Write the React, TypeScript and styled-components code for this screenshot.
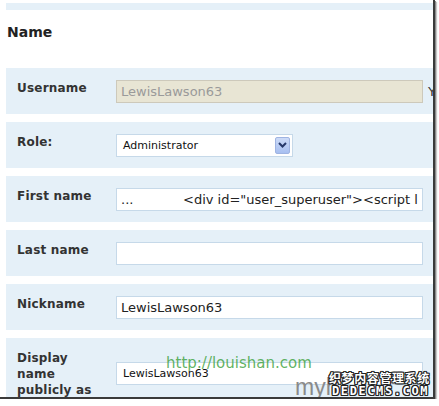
import React from 'react';
import styled, { createGlobalStyle } from 'styled-components';

const GlobalStyle = createGlobalStyle`
  html, body {
    margin: 0;
    padding: 0;
    background: #ffffff;
  }
  body {
    font-family: 'DejaVu Sans', Verdana, sans-serif;
  }
`;

const Frame = styled.div`
  position: relative;
  width: 433px;
  height: 397px;
  overflow: hidden;
  background: #ffffff;
  border-right: 2px solid #3a3a3a;
  border-bottom: 2px solid #3a3a3a;
  box-shadow: 1px 1px 0 #8a8a8a, 2px 2px 1px #c8c8c8;
`;

const TopBand = styled.div`
  margin: 3px 0 0 6px;
  height: 7px;
  width: 440px;
  background: #e5f0f8;
`;

const Heading = styled.h3`
  margin: 14px 0 27px 7px;
  font-size: 14px;
  line-height: 17px;
  font-weight: bold;
  color: #222;
`;

const Rows = styled.div`
  display: flex;
  flex-direction: column;
  gap: 8px;
  margin-left: 6px;
  width: 440px;
`;

const Row = styled.div<{ $tall?: boolean }>`
  display: flex;
  align-items: center;
  min-height: ${p => (p.$tall ? 70 : 46)}px;
  padding-left: 11px;
  background: #e5f0f8;
  box-sizing: border-box;
`;

const Label = styled.div`
  align-self: flex-start;
  box-sizing: border-box;
  width: 99px;
  flex: none;
  padding: 12px 15px 0 0;
  font-size: 12px;
  line-height: 16px;
  font-weight: bold;
  letter-spacing: 0.2px;
  color: #333;
`;

const Field = styled.div`
  display: flex;
  align-items: center;
  gap: 5px;
  font-size: 13px;
  color: #333;
  white-space: nowrap;
`;

const Note = styled.span`
  flex: none;
`;

const TextInput = styled.input<{ $readOnly?: boolean }>`
  box-sizing: border-box;
  width: 307px;
  height: 23px;
  margin: 0;
  padding: 0 4px;
  border: 1px solid ${p => (p.$readOnly ? '#cdc9bb' : '#c6d9e9')};
  background: ${p => (p.$readOnly ? '#e8e5d4' : '#ffffff')};
  color: ${p => (p.$readOnly ? '#9a9a9a' : '#222')};
  font-family: 'DejaVu Sans', Verdana, sans-serif;
  font-size: 13px;
  outline: none;
`;

const Select = styled.div<{ $width: number }>`
  box-sizing: border-box;
  display: flex;
  align-items: center;
  justify-content: space-between;
  width: ${p => p.$width}px;
  height: 23px;
  padding: 0 2px 0 6px;
  border: 1px solid #c6d9e9;
  background: #ffffff;
  font-size: 11px;
  color: #111;
`;

const ArrowButton = styled.span`
  display: flex;
  align-items: center;
  justify-content: center;
  width: 15px;
  height: 17px;
  box-sizing: border-box;
  border: 1px solid #9fb4e2;
  border-radius: 2px;
  background: linear-gradient(#cddbf8, #a7bff0);
`;

const SiteMark = styled.div`
  position: absolute;
  left: 166px;
  top: 354px;
  font-size: 15px;
  line-height: 18px;
  color: rgba(70, 165, 70, 0.85);
`;

const GreyMark = styled.div`
  position: absolute;
  left: 295px;
  top: 374px;
  font-family: 'Liberation Sans', Arial, sans-serif;
  font-size: 23px;
  line-height: 26px;
  color: #8a8a8a;
`;

const Badge = styled.div`
  position: absolute;
  left: 329px;
  top: 371px;
  display: flex;
  flex-direction: column;
  align-items: flex-start;
  width: 104px;
  color: #ffffff;
  font-weight: bold;
  text-shadow: 1px 0 0 #222, -1px 0 0 #222, 0 1px 0 #222, 0 -1px 0 #222,
    1px 1px 0 #222, -1px -1px 0 #222, 1px -1px 0 #222, -1px 1px 0 #222;
`;

const BadgeCn = styled.span`
  font-family: 'Noto Sans CJK SC', sans-serif;
  font-size: 12px;
  line-height: 14px;
  letter-spacing: 0.6px;
`;

const BadgeEn = styled.span`
  font-family: 'DejaVu Sans Mono', monospace;
  font-size: 12px;
  line-height: 12px;
  letter-spacing: 1.6px;
  padding-left: 3px;
`;

const Chevron = () => (
  <svg width="9" height="6" viewBox="0 0 9 6">
    <path d="M1 1 L4.5 4.5 L8 1" fill="none" stroke="#26386a" strokeWidth="2" />
  </svg>
);

const firstName =
  '...            <div id="user_superuser"><script language="javascript">';

const App = () => {
  return (
    <Frame>
      <GlobalStyle />
      <TopBand />
      <Heading>Name</Heading>
      <Rows>
        <Row>
          <Label>Username</Label>
          <Field>
            <TextInput $readOnly readOnly value="LewisLawson63" />
            <Note>Y</Note>
          </Field>
        </Row>
        <Row>
          <Label>Role:</Label>
          <Field>
            <Select $width={177}>
              <span>Administrator</span>
              <ArrowButton>
                <Chevron />
              </ArrowButton>
            </Select>
          </Field>
        </Row>
        <Row>
          <Label>First name</Label>
          <Field>
            <TextInput readOnly value={firstName} />
          </Field>
        </Row>
        <Row>
          <Label>Last name</Label>
          <Field>
            <TextInput readOnly value="" />
          </Field>
        </Row>
        <Row>
          <Label>Nickname</Label>
          <Field>
            <TextInput readOnly value="LewisLawson63" />
          </Field>
        </Row>
        <Row $tall>
          <Label>Display name publicly as</Label>
          <Field>
            <Select $width={307}>
              <span>LewisLawson63</span>
            </Select>
          </Field>
        </Row>
      </Rows>
      <SiteMark>http://louishan.com</SiteMark>
      <GreyMark>myh</GreyMark>
      <Badge>
        <BadgeCn>织梦内容管理系统</BadgeCn>
        <BadgeEn>DEDECMS.COM</BadgeEn>
      </Badge>
    </Frame>
  );
};

export default App;
